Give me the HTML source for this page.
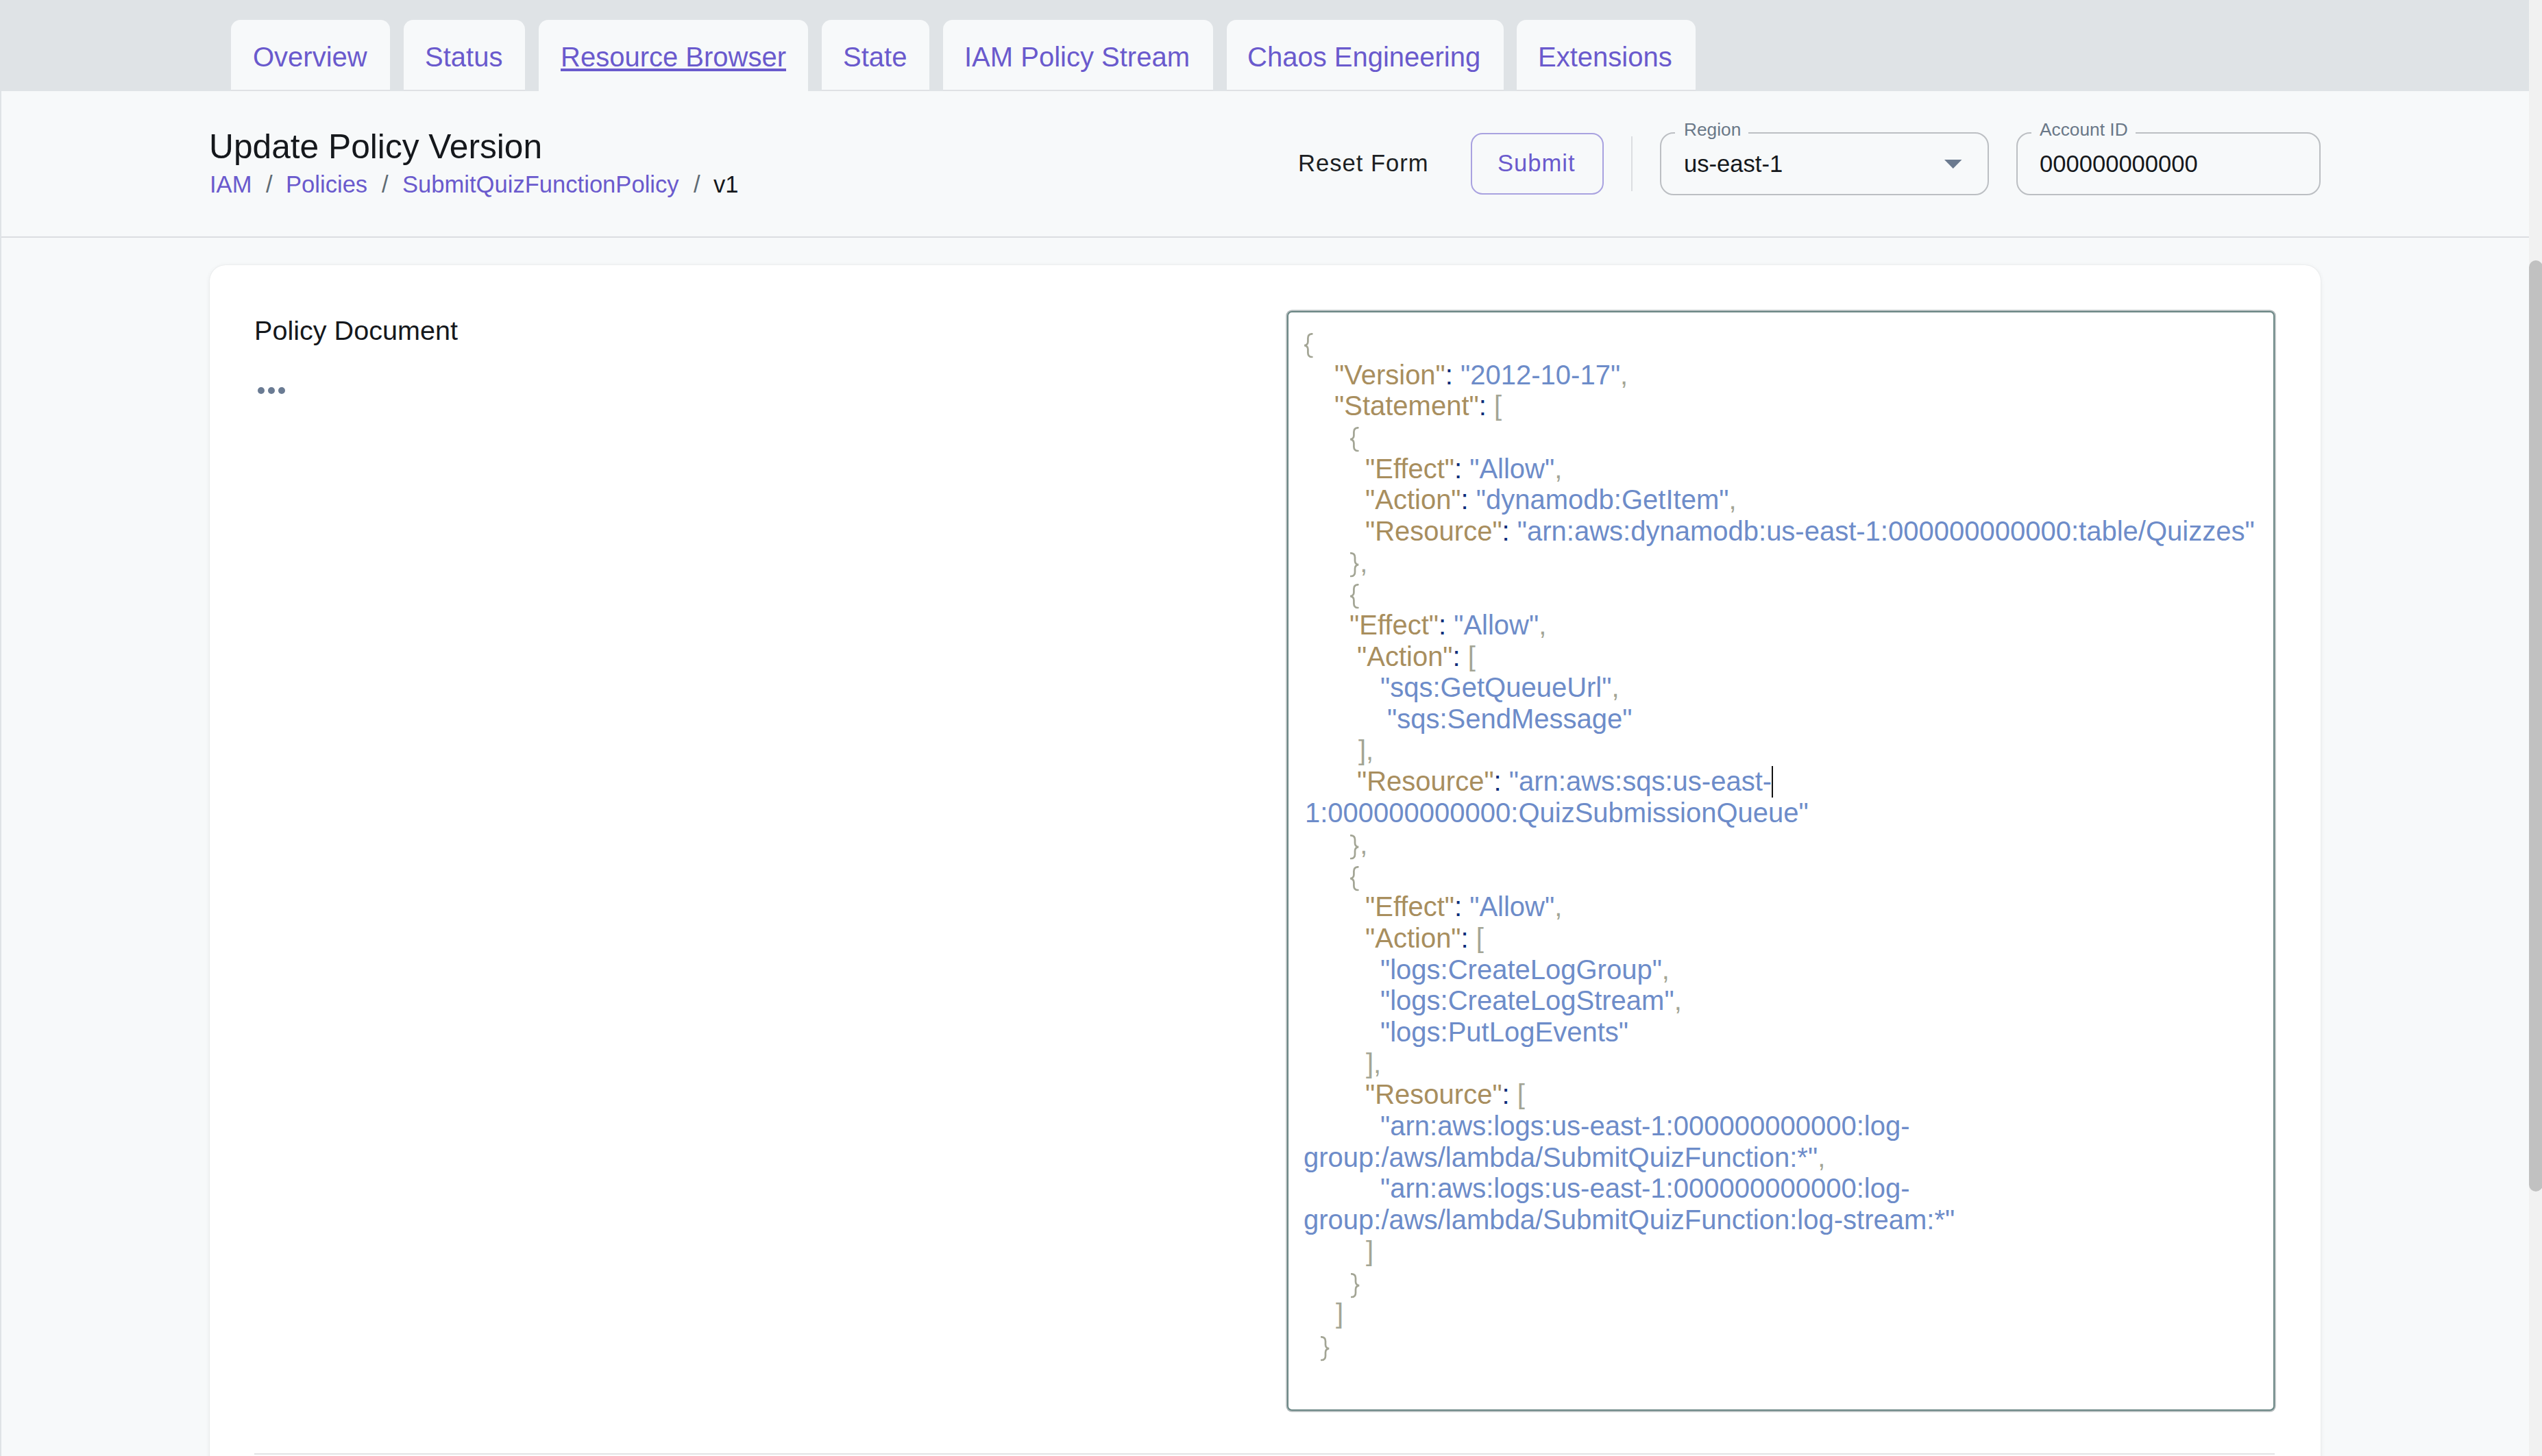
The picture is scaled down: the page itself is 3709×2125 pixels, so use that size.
<!DOCTYPE html>
<html><head><meta charset="utf-8">
<style>
*{box-sizing:border-box;margin:0;padding:0}
html,body{width:3709px;height:2125px;overflow:hidden}
body{position:relative;background:#dfe3e6;font-family:"Liberation Sans",sans-serif;color:#16191d}
.abs{position:absolute;white-space:pre}
.tab{position:absolute;top:29px;height:104px;background:#f7f9fa;border-radius:14px 14px 0 0;border-bottom:2px solid #dfe1e4}
.tab.active{border-bottom:none;height:106px}
.tabt{position:absolute;top:0;line-height:1;font-size:40px;color:#6a5acd;white-space:pre}
#main{position:absolute;left:2px;top:133px;width:3688px;height:1992px;background:#f7f9fa}
#hline{position:absolute;left:2px;top:345px;width:3688px;height:2px;background:#dcdee1}
#card{position:absolute;left:306px;top:387px;width:3080px;height:1800px;background:#fff;border-radius:23px;box-shadow:0 0 1.5px rgba(0,0,0,0.10),0 1px 7px rgba(0,0,0,0.07)}
#sbtrack{position:absolute;left:3690px;top:0;width:19px;height:2125px;background:#f1f1f1}
#sbthumb{position:absolute;left:3690px;top:380px;width:20px;height:1359px;background:#c1c1c1;border-radius:10px}
.code{position:absolute;font-size:40px;line-height:45.7px;white-space:pre}
.code .tr{color:transparent}.k{color:#a88e5e}.s{color:#6d8cc9}.c{color:#0b2d7a}.p{color:#a3a595}
</style></head><body>
<div id="main"></div>
<!-- tabs -->
<div class="tab" style="left:337px;width:232px"><span class="tabt m" style="left:32px;top:34px">Overview</span></div>
<div class="tab" style="left:589px;width:177px"><span class="tabt m" style="left:31px;top:34px">Status</span></div>
<div class="tab active" style="left:786px;width:393px"><span class="tabt m" style="left:32px;top:34px;text-decoration:underline;text-decoration-thickness:3.5px;text-underline-offset:2.5px">Resource Browser</span></div>
<div class="tab" style="left:1199px;width:157px"><span class="tabt m" style="left:31px;top:34px">State</span></div>
<div class="tab" style="left:1376px;width:394px"><span class="tabt m" style="left:31px;top:34px">IAM Policy Stream</span></div>
<div class="tab" style="left:1790px;width:404px"><span class="tabt m" style="left:30px;top:34px">Chaos Engineering</span></div>
<div class="tab" style="left:2213px;width:261px"><span class="tabt m" style="left:31px;top:34px">Extensions</span></div>
<div id="hline"></div>

<!-- header -->
<div class="abs m" style="left:305px;top:190px;font-size:49.7px;line-height:1;color:#15181c">Update Policy Version</div>
<div class="abs m" style="left:306px;top:252px;font-size:34.6px;line-height:1;color:#6a5acd">IAM</div>
<div class="abs m" style="left:388px;top:252px;font-size:34.6px;line-height:1;color:#5f6b73">/</div>
<div class="abs m" style="left:417px;top:252px;font-size:34.6px;line-height:1;color:#6a5acd">Policies</div>
<div class="abs m" style="left:557px;top:252px;font-size:34.6px;line-height:1;color:#5f6b73">/</div>
<div class="abs m" style="left:587px;top:252px;font-size:34.6px;line-height:1;color:#6a5acd">SubmitQuizFunctionPolicy</div>
<div class="abs m" style="left:1012px;top:252px;font-size:34.6px;line-height:1;color:#5f6b73">/</div>
<div class="abs m" style="left:1041px;top:252px;font-size:34.6px;line-height:1;color:#15181c">v1</div>

<div class="abs m" style="left:1894px;top:221px;font-size:34.6px;line-height:1;letter-spacing:1px;color:#1c1f23">Reset Form</div>
<div class="abs" style="left:2146px;top:194px;width:194px;height:90px;border:2px solid #a9a2e0;border-radius:17px"></div>
<div class="abs m" style="left:2185px;top:221px;font-size:34.6px;line-height:1;letter-spacing:1px;color:#6a5acd">Submit</div>
<div class="abs" style="left:2380px;top:199px;width:2px;height:80px;background:#dcdee1"></div>

<div class="abs" style="left:2422px;top:193px;width:480px;height:92px;border:2px solid #bcbfc3;border-radius:20px"></div>
<div class="abs" style="left:2444px;top:185px;width:107px;height:16px;background:#f7f9fa"></div>
<div class="abs m" style="left:2457px;top:176px;font-size:26.3px;line-height:1;color:#6a7888">Region</div>
<div class="abs m" style="left:2457px;top:222px;font-size:34.6px;line-height:1;color:#15181c">us-east-1</div>
<svg class="abs" style="left:2837px;top:233px" width="26" height="14" viewBox="0 0 26 14"><path d="M0 0 L25.5 0 L12.75 13 Z" fill="#6b7a8f"/></svg>

<div class="abs" style="left:2942px;top:193px;width:444px;height:92px;border:2px solid #bcbfc3;border-radius:20px"></div>
<div class="abs" style="left:2964px;top:185px;width:152px;height:16px;background:#f7f9fa"></div>
<div class="abs m" style="left:2976px;top:176px;font-size:26.3px;line-height:1;color:#6a7888">Account ID</div>
<div class="abs m" style="left:2976px;top:222px;font-size:34.6px;line-height:1;color:#15181c">000000000000</div>

<div id="card"></div>
<div class="abs m" style="left:371px;top:463px;font-size:39.6px;line-height:1;color:#15181c">Policy Document</div>
<div class="abs" style="left:376px;top:565px;width:10px;height:10px;border-radius:5px;background:#6a7b93"></div>
<div class="abs" style="left:391px;top:565px;width:10px;height:10px;border-radius:5px;background:#6a7b93"></div>
<div class="abs" style="left:406px;top:565px;width:10px;height:10px;border-radius:5px;background:#6a7b93"></div>

<div class="abs" style="left:371px;top:2121px;width:2948px;height:2px;background:#e2e3e5"></div>

<!-- editor -->
<div class="abs" style="left:1877.7px;top:453.8px;width:1441.3px;height:1605px;border:2.4px solid #6a8684;border-radius:7px;background:#fff;box-shadow:0 0 0 1.7px #b3bbbc"></div>
<div id="code">
<div class="code" style="left:1902px;top:479px"><span class="p tr">{</span></div>
<div class="code" style="left:1947px;top:525px"><span class="k">"Version"</span><span class="c">:</span> <span class="s">"2012-10-17"</span><span class="p">,</span></div>
<div class="code" style="left:1947px;top:570px"><span class="k">"Statement"</span><span class="c">:</span> <span class="p">[</span></div>
<div class="code" style="left:1969px;top:616px"><span class="p tr">{</span></div>
<div class="code" style="left:1992px;top:662px"><span class="k">"Effect"</span><span class="c">:</span> <span class="s">"Allow"</span><span class="p">,</span></div>
<div class="code" style="left:1992px;top:707px"><span class="k">"Action"</span><span class="c">:</span> <span class="s">"dynamodb:GetItem"</span><span class="p">,</span></div>
<div class="code" style="left:1992px;top:753px"><span class="k">"Resource"</span><span class="c">:</span> <span class="s">"arn:aws:dynamodb:us-east-1:000000000000:table/Quizzes"</span></div>
<div class="code" style="left:1971px;top:799px"><span class="p"><span class="tr">}</span>,</span></div>
<div class="code" style="left:1969px;top:844px"><span class="p tr">{</span></div>
<div class="code" style="left:1969px;top:890px"><span class="k">"Effect"</span><span class="c">:</span> <span class="s">"Allow"</span><span class="p">,</span></div>
<div class="code" style="left:1980px;top:936px"><span class="k">"Action"</span><span class="c">:</span> <span class="p">[</span></div>
<div class="code" style="left:2014px;top:981px"><span class="s">"sqs:GetQueueUrl"</span><span class="p">,</span></div>
<div class="code" style="left:2024px;top:1027px"><span class="s">"sqs:SendMessage"</span></div>
<div class="code" style="left:1982px;top:1073px"><span class="p">],</span></div>
<div class="code" style="left:1980px;top:1118px"><span class="k">"Resource"</span><span class="c">:</span> <span class="s">"arn:aws:sqs:us-east-</span></div>
<div class="code" style="left:1904px;top:1164px"><span class="s">1:000000000000:QuizSubmissionQueue"</span></div>
<div class="code" style="left:1971px;top:1210px"><span class="p"><span class="tr">}</span>,</span></div>
<div class="code" style="left:1969px;top:1256px"><span class="p tr">{</span></div>
<div class="code" style="left:1992px;top:1301px"><span class="k">"Effect"</span><span class="c">:</span> <span class="s">"Allow"</span><span class="p">,</span></div>
<div class="code" style="left:1992px;top:1347px"><span class="k">"Action"</span><span class="c">:</span> <span class="p">[</span></div>
<div class="code" style="left:2014px;top:1393px"><span class="s">"logs:CreateLogGroup"</span><span class="p">,</span></div>
<div class="code" style="left:2014px;top:1438px"><span class="s">"logs:CreateLogStream"</span><span class="p">,</span></div>
<div class="code" style="left:2014px;top:1484px"><span class="s">"logs:PutLogEvents"</span></div>
<div class="code" style="left:1993px;top:1530px"><span class="p">],</span></div>
<div class="code" style="left:1992px;top:1575px"><span class="k">"Resource"</span><span class="c">:</span> <span class="p">[</span></div>
<div class="code" style="left:2014px;top:1621px"><span class="s">"arn:aws:logs:us-east-1:000000000000:log-</span></div>
<div class="code" style="left:1902px;top:1667px"><span class="s">group:/aws/lambda/SubmitQuizFunction:*"</span><span class="p">,</span></div>
<div class="code" style="left:2014px;top:1712px"><span class="s">"arn:aws:logs:us-east-1:000000000000:log-</span></div>
<div class="code" style="left:1902px;top:1758px"><span class="s">group:/aws/lambda/SubmitQuizFunction:log-stream:*"</span></div>
<div class="code" style="left:1993px;top:1804px"><span class="p">]</span></div>
<div class="code" style="left:1971px;top:1849px"><span class="p tr">}</span></div>
<div class="code" style="left:1949px;top:1895px"><span class="p">]</span></div>
<div class="code" style="left:1926px;top:1941px"><span class="p tr">}</span></div>
</div>
<svg class="abs" style="left:1902.2px;top:486.2px" width="14" height="37" viewBox="0 0 14 37"><path d="M12.4 1.3 C8.4 1.4 6.4 3.2 6.4 7.4 L6.4 12.4 C6.4 15.9 4.6 17.6 1.3 18.15 C4.6 18.7 6.4 20.4 6.4 23.9 L6.4 28.9 C6.4 33.1 8.4 34.9 12.4 35.0" fill="none" stroke="#a3a595" stroke-width="2.7" stroke-linecap="round"/></svg>
<svg class="abs" style="left:1968.5px;top:623.4px" width="14" height="37" viewBox="0 0 14 37"><path d="M12.4 1.3 C8.4 1.4 6.4 3.2 6.4 7.4 L6.4 12.4 C6.4 15.9 4.6 17.6 1.3 18.15 C4.6 18.7 6.4 20.4 6.4 23.9 L6.4 28.9 C6.4 33.1 8.4 34.9 12.4 35.0" fill="none" stroke="#a3a595" stroke-width="2.7" stroke-linecap="round"/></svg>
<svg class="abs" style="left:1970.4px;top:806.3px" width="14" height="37" viewBox="0 0 14 37"><path transform="translate(13.4,0) scale(-1,1)" d="M12.4 1.3 C8.4 1.4 6.4 3.2 6.4 7.4 L6.4 12.4 C6.4 15.9 4.6 17.6 1.3 18.15 C4.6 18.7 6.4 20.4 6.4 23.9 L6.4 28.9 C6.4 33.1 8.4 34.9 12.4 35.0" fill="none" stroke="#a3a595" stroke-width="2.7" stroke-linecap="round"/></svg>
<svg class="abs" style="left:1969.3px;top:852.0px" width="14" height="37" viewBox="0 0 14 37"><path d="M12.4 1.3 C8.4 1.4 6.4 3.2 6.4 7.4 L6.4 12.4 C6.4 15.9 4.6 17.6 1.3 18.15 C4.6 18.7 6.4 20.4 6.4 23.9 L6.4 28.9 C6.4 33.1 8.4 34.9 12.4 35.0" fill="none" stroke="#a3a595" stroke-width="2.7" stroke-linecap="round"/></svg>
<svg class="abs" style="left:1970.3px;top:1217.9px" width="14" height="37" viewBox="0 0 14 37"><path transform="translate(13.4,0) scale(-1,1)" d="M12.4 1.3 C8.4 1.4 6.4 3.2 6.4 7.4 L6.4 12.4 C6.4 15.9 4.6 17.6 1.3 18.15 C4.6 18.7 6.4 20.4 6.4 23.9 L6.4 28.9 C6.4 33.1 8.4 34.9 12.4 35.0" fill="none" stroke="#a3a595" stroke-width="2.7" stroke-linecap="round"/></svg>
<svg class="abs" style="left:1969.0px;top:1263.6px" width="14" height="37" viewBox="0 0 14 37"><path d="M12.4 1.3 C8.4 1.4 6.4 3.2 6.4 7.4 L6.4 12.4 C6.4 15.9 4.6 17.6 1.3 18.15 C4.6 18.7 6.4 20.4 6.4 23.9 L6.4 28.9 C6.4 33.1 8.4 34.9 12.4 35.0" fill="none" stroke="#a3a595" stroke-width="2.7" stroke-linecap="round"/></svg>
<svg class="abs" style="left:1971.0px;top:1858.1px" width="14" height="37" viewBox="0 0 14 37"><path transform="translate(13.4,0) scale(-1,1)" d="M12.4 1.3 C8.4 1.4 6.4 3.2 6.4 7.4 L6.4 12.4 C6.4 15.9 4.6 17.6 1.3 18.15 C4.6 18.7 6.4 20.4 6.4 23.9 L6.4 28.9 C6.4 33.1 8.4 34.9 12.4 35.0" fill="none" stroke="#a3a595" stroke-width="2.7" stroke-linecap="round"/></svg>
<svg class="abs" style="left:1926.7px;top:1949.6px" width="14" height="37" viewBox="0 0 14 37"><path transform="translate(13.4,0) scale(-1,1)" d="M12.4 1.3 C8.4 1.4 6.4 3.2 6.4 7.4 L6.4 12.4 C6.4 15.9 4.6 17.6 1.3 18.15 C4.6 18.7 6.4 20.4 6.4 23.9 L6.4 28.9 C6.4 33.1 8.4 34.9 12.4 35.0" fill="none" stroke="#a3a595" stroke-width="2.7" stroke-linecap="round"/></svg>

<div class="abs" style="left:2585px;top:1118px;width:2px;height:46px;background:#111"></div>
<div id="sbtrack"></div>
<div id="sbthumb"></div>
</body></html>
